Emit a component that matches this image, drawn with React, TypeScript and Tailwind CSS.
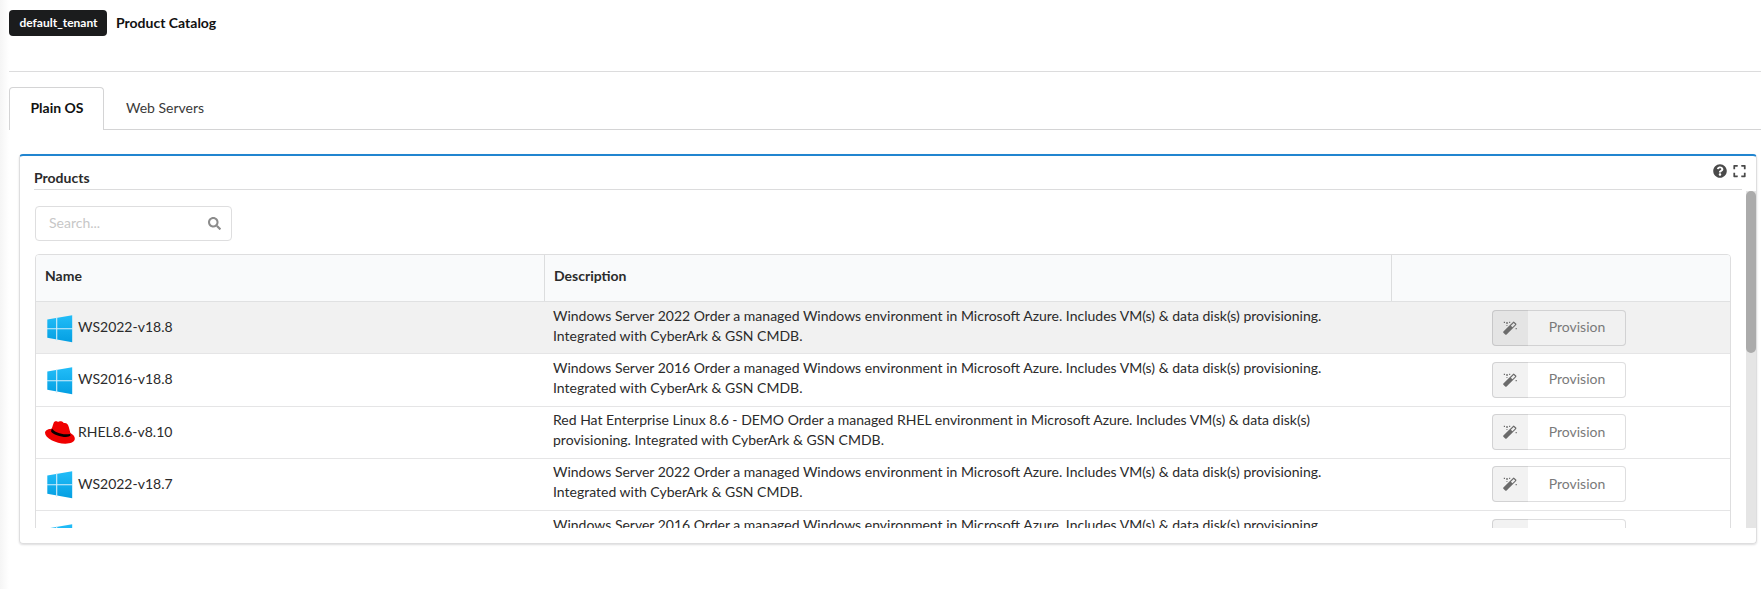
import { FaExpand, FaQuestionCircle, FaSearch } from 'react-icons/fa';

type Product = {
  name: string;
  os: 'windows' | 'redhat';
  description: string;
};

const AZURE = 'environment in Microsoft Azure. Includes VM(s) & data disk(s) provisioning. Integrated with CyberArk & GSN CMDB.';

const products: Product[] = [
  { name: 'WS2022-v18.8', os: 'windows', description: `Windows Server 2022 Order a managed Windows ${AZURE}` },
  { name: 'WS2016-v18.8', os: 'windows', description: `Windows Server 2016 Order a managed Windows ${AZURE}` },
  { name: 'RHEL8.6-v8.10', os: 'redhat', description: `Red Hat Enterprise Linux 8.6 - DEMO Order a managed RHEL ${AZURE}` },
  { name: 'WS2022-v18.7', os: 'windows', description: `Windows Server 2022 Order a managed Windows ${AZURE}` },
  { name: 'WS2016-v18.7', os: 'windows', description: `Windows Server 2016 Order a managed Windows ${AZURE}` },
];

function WindowsLogo() {
  return (
    <svg viewBox="0 0 30 30" className="h-[30px] w-[30px]">
      <defs>
        <linearGradient id="win" x1="0" y1="0" x2="0" y2="1">
          <stop offset="0" stopColor="#22bdf8" />
          <stop offset="1" stopColor="#049fe2" />
        </linearGradient>
      </defs>
      <path d="M2.3 5.5 27.2 1.3V28.2L2.3 23.8Z" fill="url(#win)" />
      <path d="M11.7 3V27M2 14.8H28" stroke="#d6effb" strokeWidth="1.1" fill="none" />
    </svg>
  );
}

function RedHatLogo() {
  return (
    <svg viewBox="0 0 30 30" className="h-[30px] w-[30px]">
      <path
        d="M0 14.8C0 12.2 3 10.9 6.6 10.7L25.3 15C28 16.3 30 18.5 29.8 21.1 29.5 24.3 25.5 25.7 20.3 25.7 10.7 25.6 0 20.2 0 14.8Z"
        fill="#f00000"
      />
      <path
        d="M6 13 8.6 5C9.2 3.2 11 3 12.7 3.8 13.6 4.1 14.4 3 16 3.3 17.7 3.5 18 4.8 19.2 5 21.6 4.7 23.1 6.4 23.7 8.8L25.8 16.5C25.6 20.3 6.3 18.8 6 13Z"
        fill="#f00000"
      />
      <path d="M6.8 10.5C9.5 14.2 17.7 17.5 25 15.9L25.6 17.6C23 21 8 17.6 6 13.2Z" fill="#0a0000" />
    </svg>
  );
}

function WandIcon() {
  return (
    <svg viewBox="0 0 14 14" className="h-[14px] w-[14px]" fill="#6b6b6b">
      <path
        fillRule="evenodd"
        d="M.4 10.5 10 .9Q10.7.3 11.4.9L13.1 2.6Q13.7 3.3 13.1 4L3.6 13.5Q2.9 14 2.2 13.5L.4 11.8Q-.1 11.2.4 10.5ZM10.7 1.9 7.9 4.7 9.4 6.2 12.2 3.4Z"
      />
      <path d="M.8.7h1.2v1.2H.8ZM3.1 1.3h1.8v1.5H3.1ZM6.1.7h1.1v1.2H6.1ZM12.6 7h1.2v1.2h-1.2ZM3.5 4.1h.9V5h-.9Z" />
    </svg>
  );
}

function ProvisionButton() {
  return (
    <button className="flex h-9 w-[134px] overflow-hidden rounded-[4px] text-[14px] text-[#7a7a7a] shadow-[inset_0_0_0_1px_rgba(34,36,38,0.15)]">
      <span className="flex h-full w-9 shrink-0 items-center justify-center bg-black/5 pr-px">
        <WandIcon />
      </span>
      <span className="flex h-[34px] flex-1 items-center justify-center">Provision</span>
    </button>
  );
}

function ProductRow({ product, active }: { product: Product; active: boolean }) {
  return (
    <div
      className={`grid h-[52.28px] grid-cols-[509px_847px_1fr] items-center border-b border-[#e5e5e6] ${
        active ? 'bg-[#f1f1f1]' : 'bg-white'
      }`}
    >
      <div className="flex items-center gap-[3px] pl-[9px]">
        <span className="pt-[2px]">{product.os === 'windows' ? <WindowsLogo /> : <RedHatLogo />}</span>
        <span className="pb-[2px]">{product.name}</span>
      </div>
      <div className="pr-16 pb-1 pl-2 leading-5">{product.description}</div>
      <div className="flex pl-[100px]">
        <ProvisionButton />
      </div>
    </div>
  );
}

export default function App() {
  return (
    <div className="flex h-[589px] w-full overflow-hidden bg-white font-['Lato',sans-serif] text-[14px] text-[#2b2b2b]">
      <div className="w-[9px] shrink-0 bg-linear-to-r from-[#f5f5f5] to-white" />
      <div className="flex min-w-0 flex-1 flex-col">
        <header className="flex h-[72px] shrink-0 items-start gap-[9px] border-b border-[#dcdcdd] pt-[10px]">
          <span className="flex h-[26px] w-[98px] items-center justify-center rounded-[4px] bg-[#1b1c1d] pl-px text-[12px] font-bold text-white">
            default_tenant
          </span>
          <h1 className="pt-[3px] text-[14px] leading-5 font-bold text-[#111]">Product Catalog</h1>
        </header>

        <nav className="flex h-[58px] shrink-0 items-end pt-[15px]">
          <a className="flex h-[43px] w-[95px] items-center justify-center rounded-t-[4px] border border-b-0 border-[#d4d4d5] pb-[3px] pl-px font-bold text-[#111]">
            Plain OS
          </a>
          <a className="flex h-[43px] flex-1 items-center border-b border-[#d4d4d5] pb-px pl-[22px] text-[#3a3a3a]">Web Servers</a>
        </nav>

        <section className="mt-6 mr-1 ml-[10px] flex h-[390px] flex-col rounded-[4px] border border-t-2 border-[#dededf] border-t-[#2185d0] shadow-[0_1px_2px_0_rgba(34,36,38,0.15)]">
          <div className="mr-[14px] ml-[14px] flex h-[34px] shrink-0 items-start justify-between border-b border-[#dcdcdd]">
            <h2 className="pt-[12px] leading-5 font-bold">Products</h2>
            <div className="-mr-1 flex items-center gap-[6px] pt-2 text-[#4a4a4a]">
              <FaQuestionCircle className="h-[14px] w-[14px]" />
              <FaExpand className="h-[14px] w-[13px]" />
            </div>
          </div>

          <div className="mt-px flex h-[337px] shrink-0">
            <div className="flex flex-1 flex-col overflow-hidden pr-[15px] pl-[15px]">
              <div className="mt-[15px] flex h-[35px] w-[197px] shrink-0 items-center justify-between rounded-[4px] border border-[#dededf] pr-[10px] pl-[13px]">
                <span className="pb-[3px] text-[#c7c7c7]">Search...</span>
                <FaSearch className="h-[13px] w-[13px] text-[#8c8c8c]" />
              </div>

              <div className="mt-[13px] shrink-0 overflow-hidden rounded-[4px] border border-[#dededf]">
                <div className="grid h-[47px] grid-cols-[509px_847px_1fr] border-b border-[#e0e1e2] bg-[#f9fafb] font-bold">
                  <div className="flex items-center border-r border-[#dcddde] pb-[5px] pl-[9px]">Name</div>
                  <div className="flex items-center border-r border-[#dcddde] pb-[5px] pl-[9px]">Description</div>
                  <div />
                </div>
                {products.map((product, index) => (
                  <ProductRow key={product.name} product={product} active={index === 0} />
                ))}
              </div>
            </div>
            <div className="w-[10px] shrink-0 bg-[#e5e5e5]">
              <div className="h-[162px] rounded-[5px] bg-[#ababab]" />
            </div>
          </div>
        </section>
      </div>
    </div>
  );
}
